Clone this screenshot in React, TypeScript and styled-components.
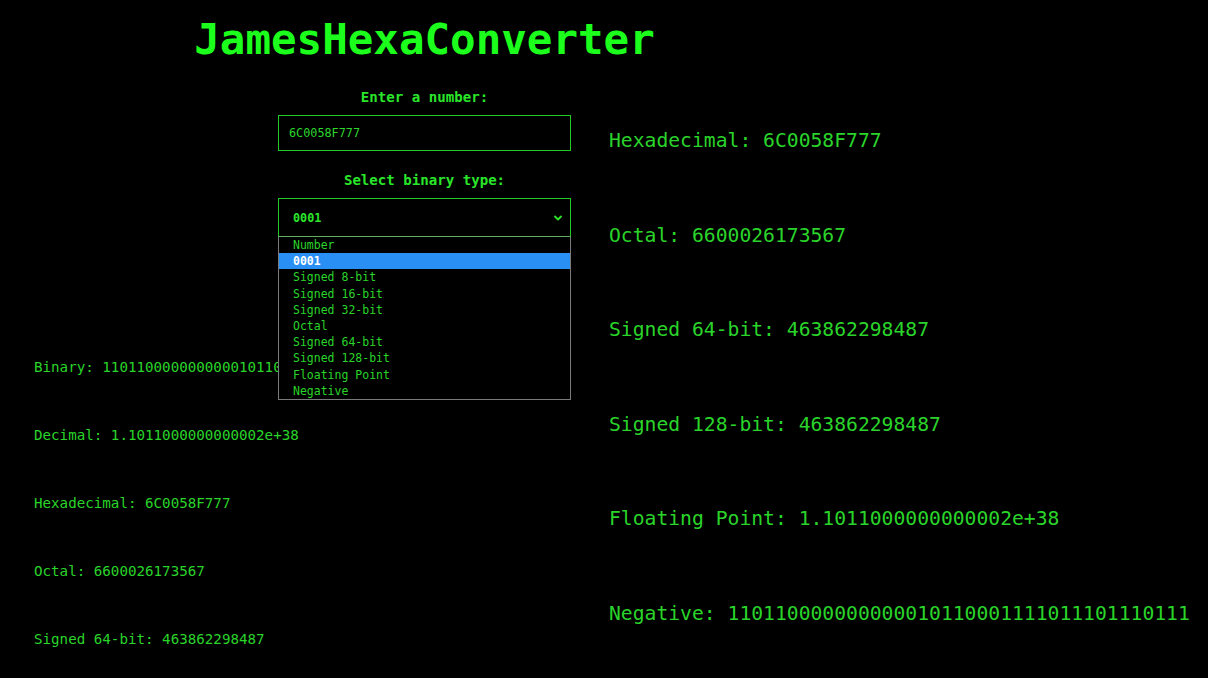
import React from "react";
import styled, { createGlobalStyle } from "styled-components";

const GlobalStyle = createGlobalStyle`
  html, body {
    margin: 0;
    padding: 0;
    background: #000;
    overflow: hidden;
  }
  body {
    font-family: "DejaVu Sans Mono", "Liberation Mono", monospace;
    color: #22e022;
  }
`;

const StyledPage = styled.div`
  display: grid;
  grid-template-columns: 609px 1fr;
  grid-template-rows: 70px 1fr;
  width: 1208px;
  height: 678px;
  background: #000;
  overflow: hidden;
`;

const StyledTitle = styled.h1`
  grid-column: 1 / 3;
  width: 849px;
  margin: 0;
  padding-top: 15px;
  text-align: center;
  font-size: 42.5px;
  font-weight: 700;
  line-height: 50px;
  color: #1cff1c;
`;

const StyledLeft = styled.div`
  display: flex;
  flex-direction: column;
`;

const StyledForm = styled.div`
  position: relative;
  display: flex;
  flex-direction: column;
  margin-left: 278px;
  width: 293px;
`;

const StyledLabel = styled.label<{ $top: number }>`
  display: block;
  text-align: center;
  font-size: 14.1px;
  font-weight: 700;
  line-height: 18px;
  color: #2ae62a;
  margin: ${(p) => p.$top}px 0 9px;
`;

const StyledInput = styled.div`
  box-sizing: border-box;
  height: 36px;
  border: 1px solid #22cc22;
  padding: 0 10px;
  display: flex;
  align-items: center;
  font-size: 11.8px;
  color: #2cd62c;
`;

const StyledSelectWrap = styled.div`
  position: relative;
`;

const StyledSelect = styled.div`
  box-sizing: border-box;
  height: 39px;
  border: 1px solid #22cc22;
  border-bottom-color: #5fae5f;
  padding: 0 7px 0 14px;
  display: flex;
  align-items: center;
  justify-content: space-between;
  font-size: 11.8px;
  font-weight: 700;
  color: #2ce62c;
`;

const StyledMenu = styled.ul`
  position: absolute;
  top: 100%;
  left: 0;
  right: 0;
  margin: 0;
  padding: 0;
  list-style: none;
  background: #000;
  border: 1px solid #7a7a7a;
  border-top: none;
  z-index: 2;
`;

const StyledOption = styled.li<{ $active?: boolean }>`
  height: 16.2px;
  line-height: 16.2px;
  padding-left: 14px;
  font-size: 11.5px;
  color: ${(p) => (p.$active ? "#fff" : "#2ad42a")};
  background: ${(p) => (p.$active ? "#2a8ff5" : "transparent")};
  font-weight: ${(p) => (p.$active ? 700 : 400)};
`;

const StyledResults = styled.div`
  display: flex;
  flex-direction: column;
  gap: 50.5px;
  padding: 122px 0 0 34px;
  white-space: nowrap;
`;

const StyledResult = styled.p`
  margin: 0;
  font-size: 14.2px;
  line-height: 17.5px;
  color: #2ad42a;
`;

const StyledRight = styled.div`
  display: flex;
  flex-direction: column;
  gap: 70.6px;
  padding-top: 59px;
  white-space: nowrap;
`;

const StyledBigResult = styled.p`
  margin: 0;
  font-size: 19.7px;
  line-height: 24px;
  color: #2ad42a;
`;

const options = [
  "Number",
  "0001",
  "Signed 8-bit",
  "Signed 16-bit",
  "Signed 32-bit",
  "Octal",
  "Signed 64-bit",
  "Signed 128-bit",
  "Floating Point",
  "Negative",
];

const binary = "110110000000000010110001111011101110111";

const leftResults = [
  `Binary: ${binary}`,
  "Decimal: 1.1011000000000002e+38",
  "Hexadecimal: 6C0058F777",
  "Octal: 6600026173567",
  "Signed 64-bit: 463862298487",
];

const rightResults = [
  "Hexadecimal: 6C0058F777",
  "Octal: 6600026173567",
  "Signed 64-bit: 463862298487",
  "Signed 128-bit: 463862298487",
  "Floating Point: 1.1011000000000002e+38",
  `Negative: ${binary}`,
];

function Chevron() {
  return (
    <svg width="10" height="10" viewBox="0 0 10 10">
      <path
        d="M2 3.5 L5 6.5 L8 3.5"
        fill="none"
        stroke="#2ce62c"
        strokeWidth="1.8"
        strokeLinecap="round"
        strokeLinejoin="round"
      />
    </svg>
  );
}

export default function App() {
  return (
    <StyledPage>
      <GlobalStyle />
      <StyledTitle>JamesHexaConverter</StyledTitle>
      <StyledLeft>
        <StyledForm>
          <StyledLabel $top={18}>Enter a number:</StyledLabel>
          <StyledInput>6C0058F777</StyledInput>
          <StyledLabel $top={20}>Select binary type:</StyledLabel>
          <StyledSelectWrap>
            <StyledSelect>
              <span>0001</span>
              <Chevron />
            </StyledSelect>
            <StyledMenu>
              {options.map((o, i) => (
                <StyledOption key={o} $active={i === 1}>
                  {o}
                </StyledOption>
              ))}
            </StyledMenu>
          </StyledSelectWrap>
        </StyledForm>
        <StyledResults>
          {leftResults.map((r) => (
            <StyledResult key={r}>{r}</StyledResult>
          ))}
        </StyledResults>
      </StyledLeft>
      <StyledRight>
        {rightResults.map((r) => (
          <StyledBigResult key={r}>{r}</StyledBigResult>
        ))}
      </StyledRight>
    </StyledPage>
  );
}
